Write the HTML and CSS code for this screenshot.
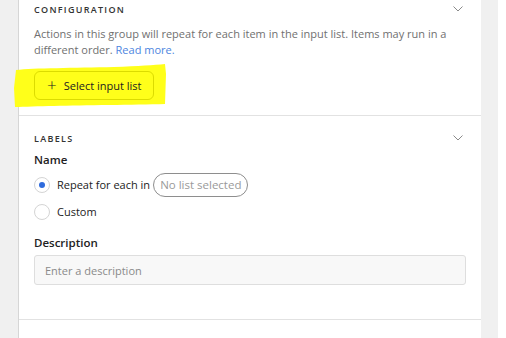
FILE: index.html
```html
<!DOCTYPE html>
<html>
<head>
<meta charset="utf-8">
<link rel="stylesheet" href="styles.css">
</head>
<body>
<div class="layout">
  <div class="rail"></div>
  <div class="panel">
    <section class="section config">
      <div class="sec-head">
        <span class="sec-title">CONFIGURATION</span>
        <svg class="chev" width="10" height="6" viewBox="0 0 10 6"><path d="M0.5 0.5 L5 5 L9.5 0.5" fill="none" stroke="#8a8a8a" stroke-width="1"/></svg>
      </div>
      <p class="desc">Actions in this group will repeat for each item in the input list. Items may run in a different order. <a class="link">Read more.</a></p>
      <div class="btn-wrap">
        <svg class="marker" width="154" height="44" viewBox="0 0 154 44"><path d="M2 6 C20 4 60 4 100 3 C125 2 140 1 151 0 L152 10 L151 40 C120 41 70 41 40 42 C25 42 10 43 1 43 L0 24 Z" fill="#ffff1a"/></svg>
        <button class="select-btn"><span class="plus">+</span>Select input list</button>
      </div>
    </section>
    <section class="section labels">
      <div class="sec-head">
        <span class="sec-title">LABELS</span>
        <svg class="chev" width="10" height="6" viewBox="0 0 10 6"><path d="M0.5 0.5 L5 5 L9.5 0.5" fill="none" stroke="#8a8a8a" stroke-width="1"/></svg>
      </div>
      <div class="field-label">Name</div>
      <div class="radio-row first">
        <span class="radio checked"></span>
        <span class="radio-text">Repeat for each in</span>
        <span class="pill">No list selected</span>
      </div>
      <div class="radio-row">
        <span class="radio"></span>
        <span class="radio-text">Custom</span>
      </div>
      <div class="field-label desc-label">Description</div>
      <div class="input">Enter a description</div>
    </section>
    <section class="section empty"></section>
  </div>
  <div class="rail-right"></div>
  <div class="edge"></div>
</div>
</body>
</html>
```
FILE: styles.css
```css
html, body { margin: 0; padding: 0; }
body {
  width: 506px; height: 338px; overflow: hidden;
  font-family: "Open Sans", "Noto Sans", sans-serif;
  background: #fff;
  color: #222;
}
.layout { display: flex; height: 338px; }
.rail { width: 18px; background: #f0f0f0; border-right: 1px solid #d6d6d6; }
.panel { width: 462px; background: #fff; display: flex; flex-direction: column; }
.rail-right { width: 17px; background: #f0f0f0; }
.edge { width: 8px; background: #fff; }
.section { padding: 0 15px; border-bottom: 1px solid #e2e2e2; }
.config { height: 115px; }
.labels { height: 203px; }
.empty { flex: 1; border-bottom: none; }
.sec-head { display: flex; justify-content: space-between; align-items: center; height: 18px; padding-right: 3px; }
.labels .sec-head { margin-top: 13px; }
.sec-title { font-size: 9px; font-weight: 600; letter-spacing: 1.3px; color: #333; }
.desc { margin: 8px 0 0; font-size: 11px; line-height: 16px; color: #707070; }
.link { color: #4d85e0; }
.btn-wrap { position: relative; margin-top: 13px; width: 120px; }
.marker { position: absolute; left: -20px; top: -7px; }
.select-btn {
  position: relative;
  display: flex; align-items: center;
  width: 120px; height: 29px; padding: 0 0 0 12px;
  background: transparent; border: 1px solid #dcdc00; border-radius: 6px;
  font-family: inherit; font-size: 11px; color: #222;
}
.plus { font-size: 17px; font-weight: 300; margin-right: 7px; line-height: 1; position: relative; top: -1px; }
.field-label { font-size: 11.5px; font-weight: 600; color: #222; line-height: 17px; margin-top: 4px; }
.radio-row { display: flex; align-items: center; height: 27px; }
.radio-row.first { margin-top: 3px; }
.radio { width: 16px; height: 16px; border: 1px solid #d4d4d4; border-radius: 50%; box-sizing: border-box; position: relative; margin-right: 7px; }
.radio.checked::after { content: ""; position: absolute; left: 4px; top: 4px; width: 6px; height: 6px; border-radius: 50%; background: #2f6bdc; }
.radio-text { font-size: 11px; color: #222; }
.pill { margin-left: 3px; font-size: 11.5px; color: #9a9a9a; border: 1px solid #8e8e8e; border-radius: 12px; padding: 3px 6px; line-height: 16px; }
.desc-label { margin-top: 9px; }
.input { margin-top: 4px; height: 30px; box-sizing: border-box; border: 1px solid #dedede; border-radius: 3px; background: #f8f8f8; font-size: 11px; color: #8a8a8a; padding-left: 10px; display: flex; align-items: center; }
```
